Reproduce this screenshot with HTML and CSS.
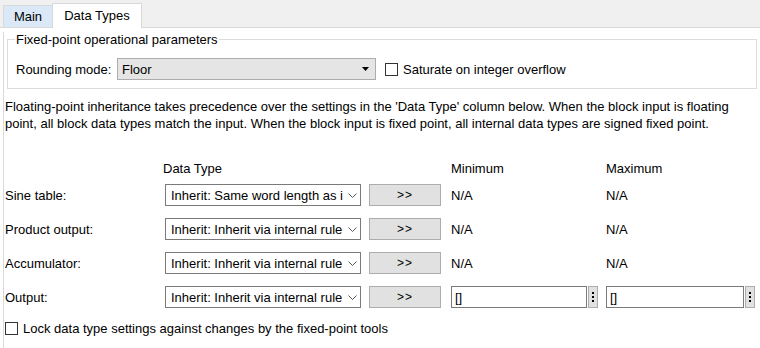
FILE: index.html
```html
<!DOCTYPE html>
<html>
<head>
<meta charset="utf-8">
<link rel="stylesheet" href="styles.css">
</head>
<body>
<div class="tabs">
  <div class="tab tab-main">Main</div>
  <div class="tab tab-active">Data Types</div>
</div>
<div class="panel">
  <fieldset class="group">
    <legend class="legend">Fixed-point operational parameters</legend>
    <div class="round-row">
      <span class="round-label">Rounding mode:</span>
      <div class="combo">
        <span>Floor</span>
        <svg class="tri" width="7" height="4" viewBox="0 0 7 4"><polygon points="0,0 7,0 3.5,4" fill="#000"/></svg>
      </div>
      <span class="check"></span>
      <span>Saturate on integer overflow</span>
    </div>
  </fieldset>
  <p class="note">Floating-point inheritance takes precedence over the settings in the 'Data Type' column below. When the block input is floating point, all block data types match the input. When the block input is fixed point, all internal data types are signed fixed point.</p>
  <div class="grid">
    <div class="hdr"></div>
    <div class="hdr hdr-dt">Data Type</div>
    <div class="hdr"></div>
    <div class="hdr">Minimum</div>
    <div class="hdr">Maximum</div>

    <div class="lbl">Sine table:</div>
    <div class="dd"><span class="ddtext">Inherit: Same word length as input</span><svg class="chev" width="9" height="5" viewBox="0 0 9 5"><polyline points="0.5,0.5 4.5,4.5 8.5,0.5" fill="none" stroke="#555" stroke-width="1"/></svg></div>
    <div class="btn">&gt;&gt;</div>
    <div class="val">N/A</div>
    <div class="val">N/A</div>

    <div class="lbl">Product output:</div>
    <div class="dd"><span class="ddtext">Inherit: Inherit via internal rule</span><svg class="chev" width="9" height="5" viewBox="0 0 9 5"><polyline points="0.5,0.5 4.5,4.5 8.5,0.5" fill="none" stroke="#555" stroke-width="1"/></svg></div>
    <div class="btn">&gt;&gt;</div>
    <div class="val">N/A</div>
    <div class="val">N/A</div>

    <div class="lbl">Accumulator:</div>
    <div class="dd"><span class="ddtext">Inherit: Inherit via internal rule</span><svg class="chev" width="9" height="5" viewBox="0 0 9 5"><polyline points="0.5,0.5 4.5,4.5 8.5,0.5" fill="none" stroke="#555" stroke-width="1"/></svg></div>
    <div class="btn">&gt;&gt;</div>
    <div class="val">N/A</div>
    <div class="val">N/A</div>

    <div class="lbl">Output:</div>
    <div class="dd"><span class="ddtext">Inherit: Inherit via internal rule</span><svg class="chev" width="9" height="5" viewBox="0 0 9 5"><polyline points="0.5,0.5 4.5,4.5 8.5,0.5" fill="none" stroke="#555" stroke-width="1"/></svg></div>
    <div class="btn">&gt;&gt;</div>
    <div class="editwrap"><div class="edit">[]</div><div class="more"><i></i><i></i><i></i></div></div>
    <div class="editwrap"><div class="edit">[]</div><div class="more"><i></i><i></i><i></i></div></div>
  </div>
  <div class="lock">
    <span class="check"></span>
    <span>Lock data type settings against changes by the fixed-point tools</span>
  </div>
</div>
</body>
</html>
```

FILE: styles.css
```css
html, body {
  margin: 0;
  padding: 0;
  background: #ffffff;
  color: #000000;
  font-family: "Liberation Sans", Arial, sans-serif;
  font-size: 13px;
}
.tabs {
  height: 27px;
  background: #f0f0f0;
  border-bottom: 1px solid #d9d9d9;
  display: flex;
  align-items: flex-end;
  padding-left: 3px;
  box-sizing: content-box;
}
.tab {
  box-sizing: border-box;
  border: 1px solid #d9d9d9;
  border-bottom: none;
  display: flex;
  align-items: center;
  justify-content: center;
}
.tab-main {
  width: 49px;
  height: 22px;
  background: #dae8f8;
  border-right: none;
}
.tab-active {
  width: 90px;
  background: #ffffff;
  margin-bottom: -1px;
  height: 25px;
  padding-bottom: 2px;
}
.panel {
  margin-left: 3px;
  border-left: 1px solid #d9d9d9;
  height: 320px;
}
.group {
  margin: 4px 3px 0 3px;
  border: 1px solid #dcdcdc;
  padding: 0 8px 8px 8px;
  height: 57px;
  box-sizing: border-box;
}
.legend {
  padding: 0 1px;
  margin-left: -1px;
  line-height: 15px;
}
.round-row {
  display: flex;
  align-items: center;
  margin-top: 11px;
}
.round-label {
  width: 101px;
}
.combo {
  box-sizing: border-box;
  width: 259px;
  height: 22px;
  background: #e5e5e5;
  border: 1px solid #adadad;
  display: flex;
  align-items: center;
  justify-content: space-between;
  padding: 0 6px 0 4px;
  margin-right: 9px;
}
.check {
  box-sizing: border-box;
  width: 13px;
  height: 13px;
  border: 1px solid #333333;
  background: #ffffff;
  margin-right: 5px;
  flex: none;
}
.note {
  margin: 9px 0 0 1px;
  line-height: 17px;
}
.grid {
  display: grid;
  grid-template-columns: 152px 196px 72px 149px 149px;
  column-gap: 8px;
  row-gap: 12px;
  grid-template-rows: 16px repeat(4, 22px);
  margin: 24px 0 0 1px;
  align-items: center;
}
.grid > :nth-child(5n+4) { margin-left: 2px; }
.grid .hdr { align-self: end; margin-bottom: -4px; }
.grid .hdr-dt { margin-left: -2px; }
.dd {
  box-sizing: border-box;
  height: 22px;
  border: 1px solid #7a7a7a;
  background: #ffffff;
  display: flex;
  align-items: center;
  padding: 0 3px 0 5px;
}
.ddtext {
  white-space: nowrap;
  overflow: hidden;
  width: 172px;
  flex: none;
}
.chev {
  flex: none;
  margin-left: 5px;
}
.btn {
  box-sizing: border-box;
  height: 22px;
  background: #e1e1e1;
  border: 1px solid #adadad;
  display: flex;
  align-items: center;
  justify-content: center;
  font-size: 12px;
  letter-spacing: 1px;
}
.editwrap {
  display: flex;
  gap: 1px;
  height: 22px;
}
.edit {
  box-sizing: border-box;
  flex: 1;
  border: 1px solid #7a7a7a;
  display: flex;
  align-items: center;
  padding-left: 3px;
}
.more {
  box-sizing: border-box;
  width: 10px;
  border: 1px solid #adadad;
  background: #e1e1e1;
  display: flex;
  flex-direction: column;
  align-items: center;
  justify-content: center;
  gap: 2px;
}
.more i {
  display: block;
  width: 2px;
  height: 2px;
  background: #000000;
}
.lock {
  display: flex;
  align-items: center;
  margin: 13px 0 0 1px;
}
```
